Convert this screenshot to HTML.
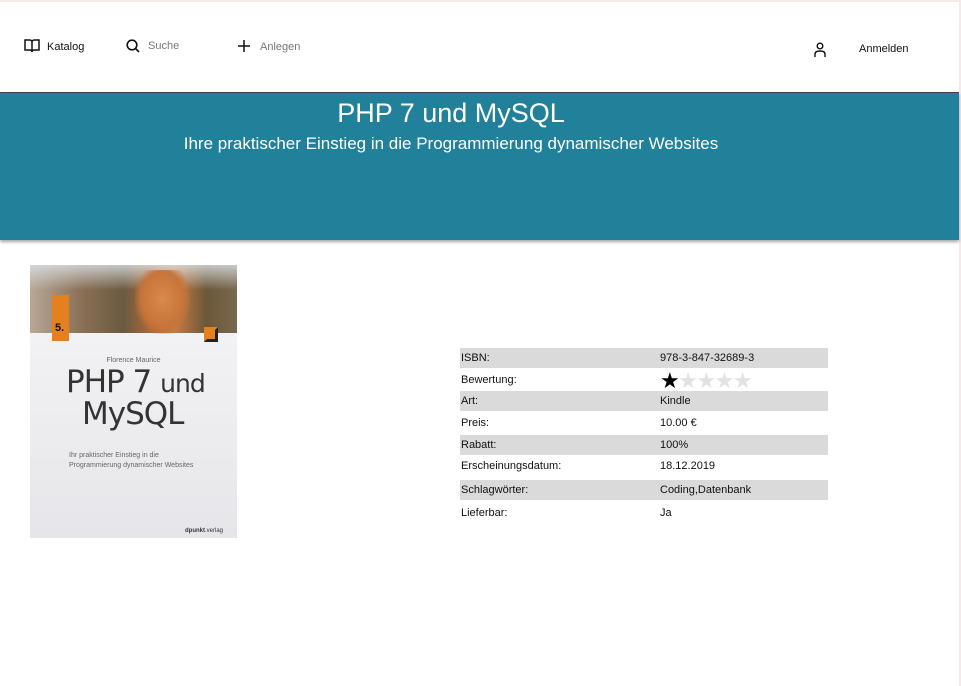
<!DOCTYPE html>
<html><head><meta charset="utf-8"><style>
*{margin:0;padding:0;box-sizing:border-box}
body{width:961px;height:686px;background:#fff;font-family:"Liberation Sans",sans-serif;position:relative;overflow:hidden}
.bt{position:absolute;left:0;top:0;width:961px;height:2px;background:#f7e8ea}
.br{position:absolute;right:0;top:0;width:2px;height:686px;background:#f7e8ea}
.nav{position:absolute;font-size:11px;color:#111}
.g{color:#777}
.band{position:absolute;left:0;top:92px;width:959px;height:148px;background:#22819a;border-top:1px solid #444;box-shadow:0 2px 3px rgba(0,0,0,.35)}
.t1{position:absolute;left:0;width:902px;text-align:center;top:98px;color:#fff;font-size:27px}
.t2{position:absolute;left:0;width:902px;text-align:center;top:134px;color:#fff;font-size:17px}
.row{position:absolute;left:460px;width:368px;height:20px;font-size:11px;color:#111;line-height:21px}
.row.s{background:#dadada}
.row span{position:absolute;left:200px}
.row b{font-weight:normal;position:absolute;left:1px}
</style></head><body>
<div class="bt"></div><div class="br"></div>
<svg style="position:absolute;left:24px;top:39px" width="16" height="14" viewBox="0 0 16 14"><path d="M1 1h5c1 0 2 1 2 2v10c0-1-1-2-2-2H1zM15 1h-5c-1 0-2 1-2 2v10c0-1 1-2 2-2h5z" fill="none" stroke="#111" stroke-width="1.5"/></svg>
<div class="nav" style="left:47px;top:41px">Katalog</div>
<svg style="position:absolute;left:126px;top:39px" width="14" height="14" viewBox="0 0 14 14"><circle cx="6" cy="6" r="4.8" fill="none" stroke="#111" stroke-width="1.6"/><path d="M9.5 9.5L13 13" stroke="#111" stroke-width="1.6"/></svg>
<div class="nav g" style="left:148px;top:40px">Suche</div>
<svg style="position:absolute;left:238px;top:40px" width="12" height="12"><path d="M6 0v12M0 6h12" stroke="#111" stroke-width="1.5"/></svg>
<div class="nav g" style="left:260px;top:41px">Anlegen</div>
<svg style="position:absolute;left:813px;top:42px" width="14" height="15" viewBox="0 0 14 15"><circle cx="7" cy="4" r="2.8" fill="none" stroke="#111" stroke-width="1.4"/><path d="M2 15v-3c0-2 2-3 5-3s5 1 5 3v3" fill="none" stroke="#111" stroke-width="1.4"/></svg>
<div class="nav" style="left:859px;top:43px">Anmelden</div>
<div class="band"></div>
<div class="t1">PHP 7 und MySQL</div>
<div class="t2">Ihre praktischer Einstieg in die Programmierung dynamischer Websites</div>

<div style="position:absolute;left:30px;top:265px;width:207px;height:273px;background:linear-gradient(#f6f6f8,#e6e6ea);overflow:hidden">
 <div style="position:absolute;left:0;top:0;width:207px;height:68px;background:linear-gradient(90deg,#b8a897 0%,#8a7055 25%,#6a5a40 45%,#b06a38 60%,#c77b45 70%,#6c5838 85%,#786850 100%)"></div>
 <div style="position:absolute;left:0;top:0;width:207px;height:25px;background:linear-gradient(rgba(220,225,230,.8),rgba(220,225,230,0))"></div>
 <div style="position:absolute;left:105px;top:5px;width:55px;height:64px;background:radial-gradient(ellipse at 50% 45%,#d98a4c 0%,#c7743a 55%,rgba(150,90,50,0) 75%)"></div>
 <div style="position:absolute;left:22px;top:30px;width:17px;height:46px;background:#e4811e;color:#111;font-size:11px;font-weight:bold;padding:27px 0 0 3px">5.</div>
 <div style="position:absolute;left:174px;top:62px;width:14px;height:15px;background:#e4811e;border:3px solid #222;border-left-color:#e4811e;border-top-color:#e4811e"></div>
 <div style="position:absolute;left:0;width:207px;top:92px;text-align:center;font-size:7px;color:#666">Florence Maurice</div>
 <div style="position:absolute;left:36px;top:99px;font-size:31px;color:#333;font-family:'DejaVu Sans',sans-serif;letter-spacing:-1px">PHP 7 <span style="font-size:25px">und</span></div>
 <div style="position:absolute;left:52px;top:131px;font-size:31px;color:#333;font-family:'DejaVu Sans',sans-serif;letter-spacing:-1px">MySQL</div>
 <div style="position:absolute;left:39px;top:186px;font-size:7px;color:#666;line-height:10px">Ihr praktischer Einstieg in die<br>Programmierung dynamischer Websites</div>
 <div style="position:absolute;left:155px;top:263px;font-size:6px;color:#333"><b>dpunkt</b>.verlag</div>
</div>

<div class="row s" style="top:348px"><b>ISBN:</b><span>978-3-847-32689-3</span></div>
<div class="row" style="top:370px"><b>Bewertung:</b><span style="font-size:22px;line-height:21px;letter-spacing:-1.5px"><span style="position:static;color:#000">★</span><span style="position:static;color:#e2e2e2">★★★★</span></span></div>
<div class="row s" style="top:391px"><b>Art:</b><span>Kindle</span></div>
<div class="row" style="top:413px"><b>Preis:</b><span>10.00 €</span></div>
<div class="row s" style="top:435px"><b>Rabatt:</b><span>100%</span></div>
<div class="row" style="top:456px"><b>Erscheinungsdatum:</b><span>18.12.2019</span></div>
<div class="row s" style="top:480px"><b>Schlagwörter:</b><span>Coding,Datenbank</span></div>
<div class="row" style="top:503px"><b>Lieferbar:</b><span>Ja</span></div>
</body></html>
